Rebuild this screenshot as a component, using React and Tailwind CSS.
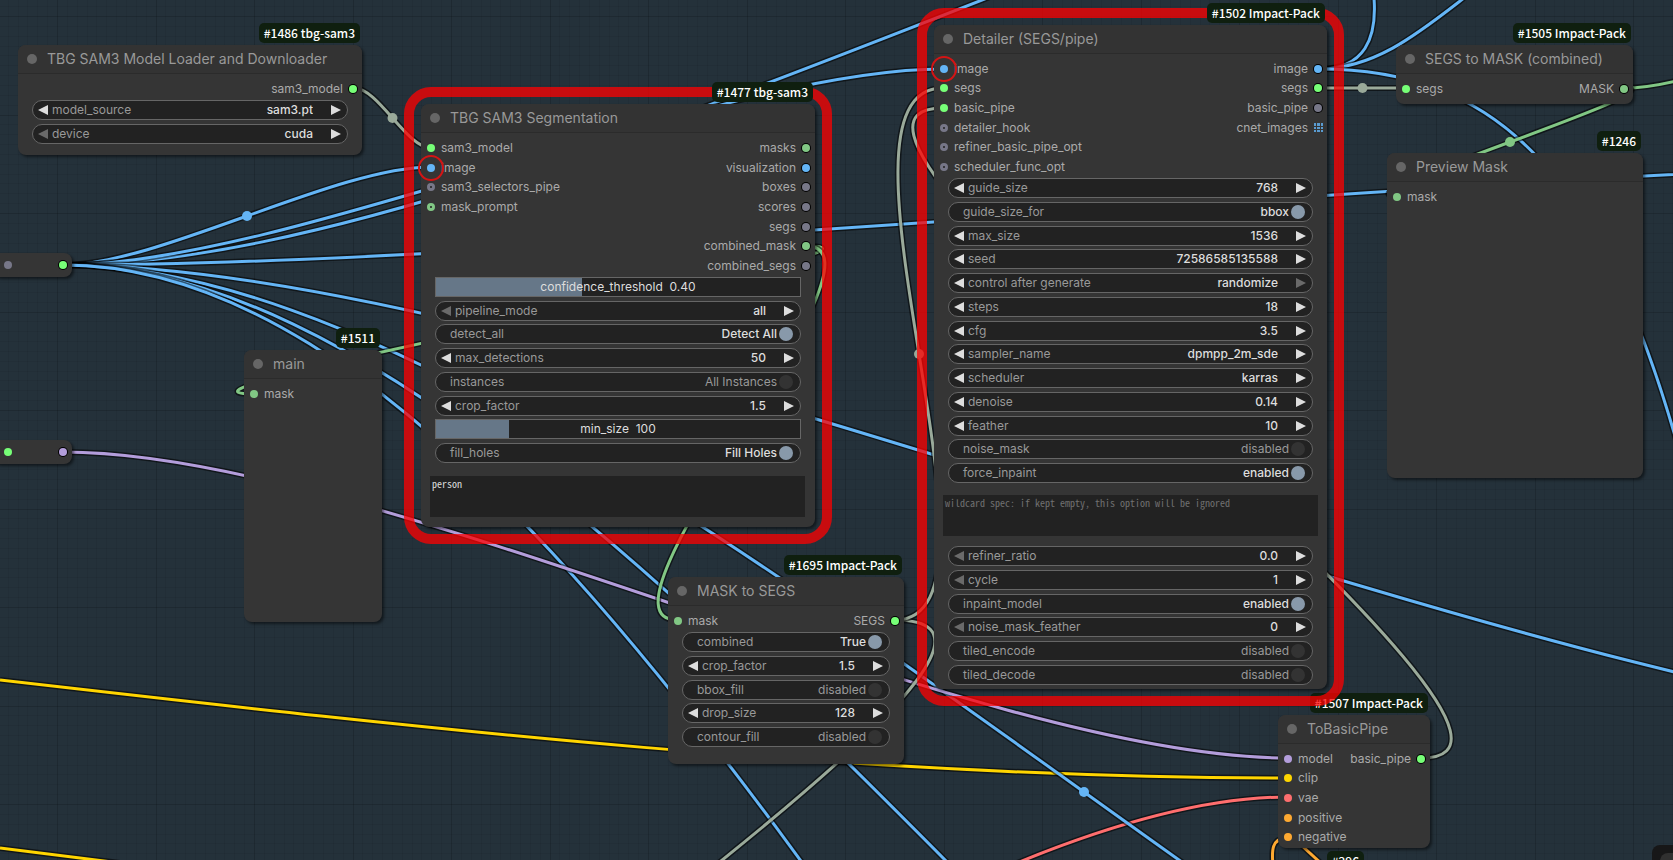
import { useId, useState } from 'react';

const LINK_COLORS = {
  image: '#64b5f6',
  mask: '#81c784',
  model: '#b39ddb',
  clip: '#ffd500',
  vae: '#ff6e6e',
  cond: '#ffa931',
  any: '#9aaa9a',
};

const PORT_FILLS = {
  image: 'bg-[#64b5f6]',
  mask: 'bg-[#81c784]',
  model: 'bg-[#b39ddb]',
  clip: 'bg-[#ffd500]',
  vae: 'bg-[#ff6e6e]',
  cond: 'bg-[#ffa931]',
  any: 'bg-[#77ff77]',
  none: 'bg-[#778]',
};

const PORT_RINGS = {
  mask: 'border-[#81c784]',
  none: 'border-[#778]',
};

// Links between ports, in canvas coordinates
const links = [
  { type: 'image', from: [63, 265], to: [431, 167], dot: true },
  { type: 'image', from: [63, 265], to: [1937, -279] },
  { type: 'image', from: [63, 265], to: [943, 69] },
  { type: 'image', from: [63, 265], to: [2040, 163] },
  { type: 'image', from: [63, 265], to: [2097, 735] },
  { type: 'image', from: [63, 265], to: [2105, 1319], dot: true },
  { type: 'image', from: [63, 265], to: [2005, 1635] },
  { type: 'image', from: [63, 265], to: [1990, 2100] },
  { type: 'any', from: [354, 88], to: [431, 148], dot: true },
  { type: 'model', from: [63, 452], to: [1288, 758] },
  { type: 'mask', from: [806, 246], to: [254, 394] },
  { type: 'mask', from: [806, 246], to: [677, 620] },
  { type: 'any', from: [895, 620], to: [100, 1450] },
  { type: 'any', from: [895, 620], to: [943, 88], dot: true },
  { type: 'any', from: [1421, 758], to: [943, 108] },
  { type: 'any', from: [1319, 88], to: [1406, 88], dot: true },
  { type: 'mask', from: [1624, 88], to: [1396, 196], dot: true },
];

// Links whose far end is off screen
const looseLinks = [
  { type: 'clip', d: 'M0 680 C427 729 860 778 1288 778' },
  { type: 'clip', d: 'M0 848 L120 863' },
  { type: 'vae', d: 'M1005 868 C1100 828 1200 797 1288 797' },
  { type: 'cond', d: 'M1288 837 C1270 839 1272 852 1273 866' },
  { type: 'cond', d: 'M1300 844 L1324 866' },
  { type: 'mask', d: 'M1624 88 C1645 88 1660 85 1680 80' },
  { type: 'image', d: 'M1319 69 C1365 69 1377 38 1374 -2' },
  { type: 'image', d: 'M1319 69 C1375 69 1420 32 1464 -2' },
  { type: 'image', d: 'M1319 69 C1490 69 1608 164 1690 492' },
];

function linkPath([x1, y1], [x2, y2]) {
  const bend = Math.hypot(x2 - x1, y2 - y1) / 4;
  return `M${x1} ${y1} C${x1 + bend} ${y1} ${x2 - bend} ${y2} ${x2} ${y2}`;
}

function Link({ type, d }) {
  return (
    <g fill="none">
      <path d={d} stroke="#000" strokeOpacity="0.55" strokeWidth="6" />
      <path d={d} stroke={LINK_COLORS[type]} strokeWidth="3" />
    </g>
  );
}

function CanvasBackground() {
  const minor = Array.from({ length: 20 }, (_, i) => Math.round((i * 197) / 20));

  return (
    <svg className="absolute inset-0 h-full w-full" aria-hidden="true">
      <defs>
        <pattern id="grid" x="57" y="16" width="197" height="197" patternUnits="userSpaceOnUse">
          {minor.map((p, i) => (
            <g key={p} fill="#000" fillOpacity={i % 10 === 0 ? 0.16 : 0.06}>
              <rect x={p} y="0" width="1" height="197" />
              <rect x="0" y={p} width="197" height="1" />
            </g>
          ))}
        </pattern>
      </defs>
      <rect width="100%" height="100%" fill="url(#grid)" />
      {looseLinks.map((link) => (
        <Link key={link.d} type={link.type} d={link.d} />
      ))}
      {links.map(({ type, from, to, dot }) => (
        <g key={`${from}-${to}`}>
          <Link type={type} d={linkPath(from, to)} />
          {dot && (
            <circle
              cx={(from[0] + to[0]) / 2}
              cy={(from[1] + to[1]) / 2}
              r="5"
              fill={LINK_COLORS[type]}
            />
          )}
        </g>
      ))}
    </svg>
  );
}

function Port({ type, output, optional }) {
  if (optional) {
    return <span className={`size-2 shrink-0 rounded-full border-[3px] bg-[#222] ${PORT_RINGS[type]}`} />;
  }
  return (
    <span
      className={`size-2 shrink-0 rounded-full ${PORT_FILLS[type]} ${output ? 'ring-1 ring-black' : ''}`}
    />
  );
}

// Image list outputs use a small grid instead of a round port
function ListPort() {
  return (
    <span className="-mr-px grid size-[9px] shrink-0 grid-cols-3 gap-px">
      {Array.from({ length: 9 }, (_, i) => (
        <span key={i} className="bg-[#5a9bd0]" />
      ))}
    </span>
  );
}

function Input({ name, type, optional, marked }) {
  return (
    <li className="flex items-center gap-[6px]">
      <span className="relative flex">
        <Port type={type} optional={optional} />
        {marked && <span className="absolute -inset-[9px] z-10 rounded-full border-2 border-[#d41414]" />}
      </span>
      {name}
    </li>
  );
}

function Output({ name, type, list }) {
  return (
    <li className="flex items-center justify-end gap-[6px]">
      {name}
      {list ? <ListPort /> : <Port type={type} output />}
    </li>
  );
}

function Slots({ inputs = [], outputs = [], height }) {
  return (
    <div className={`mt-[5px] flex justify-between px-[5px] text-xs text-[#aaa] ${height}`}>
      <ul className="grid h-full auto-rows-fr pl-px">
        {inputs.map((slot) => (
          <Input key={slot.name} {...slot} />
        ))}
        {Array.from({ length: Math.max(0, outputs.length - inputs.length) }, (_, i) => (
          <li key={i} aria-hidden="true" />
        ))}
      </ul>
      <ul className="grid h-full auto-rows-fr">
        {outputs.map((slot) => (
          <Output key={slot.name} {...slot} />
        ))}
        {Array.from({ length: Math.max(0, inputs.length - outputs.length) }, (_, i) => (
          <li key={i} aria-hidden="true" />
        ))}
      </ul>
    </div>
  );
}

function Arrow({ dir, disabled, label }) {
  return (
    <button
      type="button"
      disabled={disabled}
      aria-label={label}
      className="shrink-0 text-[#ddd] disabled:text-[#6a6a6a]"
    >
      <svg className="block h-[10px] w-[10px]" viewBox="0 0 10 10" fill="currentColor" aria-hidden="true">
        {dir === 'left' ? <path d="M10 0v10L0 5z" /> : <path d="M0 0v10l10-5z" />}
      </svg>
    </button>
  );
}

const pill = 'flex h-5 items-center rounded-full border border-[#666] bg-[#222] text-xs';
const valueField =
  'w-0 min-w-0 flex-1 appearance-none bg-transparent text-right font-medium text-[#ddd] outline-none';

function Stepper({ name, value, options, first, last }) {
  const id = useId();

  return (
    <div className={`${pill} gap-1 pr-[6px] pl-[5px]`}>
      <Arrow dir="left" disabled={first} label={`Decrease ${name}`} />
      <label htmlFor={id} className="whitespace-nowrap text-[#999]">
        {name}
      </label>
      {options ? (
        <select id={id} defaultValue={value} className={`${valueField} mr-[14px] [text-align-last:right]`}>
          {options.map((option) => (
            <option key={option}>{option}</option>
          ))}
        </select>
      ) : (
        <input id={id} type="text" defaultValue={value} className={`${valueField} mr-[14px]`} />
      )}
      <Arrow dir="right" disabled={last} label={`Increase ${name}`} />
    </div>
  );
}

function Toggle({ name, on = 'enabled', off = 'disabled', value = false }) {
  const [checked, setChecked] = useState(value);

  return (
    <label className={`${pill} justify-between pl-[14px] pr-[7px] text-[#999]`}>
      {name}
      <span className="flex items-center gap-[2px]">
        <span className={checked ? 'font-medium text-[#ddd]' : ''}>{checked ? on : off}</span>
        <input
          type="checkbox"
          checked={checked}
          onChange={(e) => setChecked(e.target.checked)}
          className="size-[14px] appearance-none rounded-full bg-[#333] checked:bg-[#89a]"
        />
      </span>
    </label>
  );
}

function Slider({ name, value, max, step = 1, digits = 0 }) {
  const [current, setCurrent] = useState(value);

  return (
    <label className="relative flex h-5 items-center justify-center border border-[#666] bg-[#222] text-xs text-[#ddd]">
      <span className="absolute inset-y-0 left-0 bg-[#678]" style={{ width: `${(current / max) * 100}%` }} />
      <span className="relative whitespace-pre">{`${name}  ${current.toFixed(digits)}`}</span>
      <input
        type="range"
        min="0"
        max={max}
        step={step}
        value={current}
        onChange={(e) => setCurrent(Number(e.target.value))}
        className="absolute inset-0 h-full w-full opacity-0"
      />
    </label>
  );
}

function Widgets({ className, children }) {
  return <div className={`mx-[14px] flex flex-col justify-between ${className}`}>{children}</div>;
}

function TextBox({ label, className = '', ...props }) {
  return (
    <textarea
      aria-label={label}
      className={`mx-[9px] block h-[41px] resize-none bg-[#222] p-[2px] font-['Noto_Sans_Mono_CJK_JP','Noto_Sans_CJK_JP',monospace] text-[10px] leading-[11px] text-[#ddd] outline-none placeholder:text-[#707070] ${className}`}
      {...props}
    />
  );
}

function Badge({ children }) {
  return (
    <span className="absolute right-[2px] bottom-full mb-[2px] h-5 whitespace-nowrap rounded-[5px] bg-[#0f1f0f] px-[5px] font-['Noto_Sans_CJK_JP',sans-serif] text-xs leading-5 font-medium text-white">
      {children}
    </span>
  );
}

function Node({ title, badge, className, highlighted, children }) {
  return (
    <section
      className={`absolute rounded-lg bg-[#353535] shadow-[2px_2px_3px_rgba(0,0,0,0.5)] ${className}`}
    >
      {highlighted && (
        <span className="pointer-events-none absolute -inset-[17px] rounded-[27px] border-[10px] border-[#ff0000]/75" />
      )}
      <Badge>{badge}</Badge>
      <header className="flex h-[29px] items-center gap-[10px] rounded-t-lg border-b border-[#2b2b2b] bg-[#333] pl-[9px]">
        <button type="button" aria-label={`Collapse ${title}`} className="size-[10px] rounded-full bg-[#666]" />
        <h2 className="whitespace-nowrap text-sm text-[#999]">{title}</h2>
      </header>
      {children}
    </section>
  );
}

function CollapsedNode({ className, input, output }) {
  return (
    <div
      className={`absolute -left-2 flex h-6 w-20 items-center justify-between rounded-lg bg-[#353535] px-[5px] pl-[12px] shadow-[2px_2px_3px_rgba(0,0,0,0.5)] ${className}`}
    >
      <Port type={input} />
      <Port type={output} output />
    </div>
  );
}

function App() {
  return (
    <main className="relative h-screen w-full overflow-hidden bg-[#24313a] font-[Inter,sans-serif]">
      <CanvasBackground />

      <CollapsedNode className="top-[253px]" input="none" output="any" />
      <CollapsedNode className="top-[440px]" input="any" output="model" />

      <Node title="TBG SAM3 Model Loader and Downloader" badge="#1486 tbg-sam3" className="top-[45px] left-[18px] w-[344px] pb-[11px]">
        <Slots height="h-5" outputs={[{ name: 'sam3_model', type: 'any' }]} />
        <Widgets className="mt-px h-11">
          <Stepper name="model_source" value="sam3.pt" options={['sam3.pt']} />
          <Stepper name="device" value="cuda" options={['cuda', 'cpu']} first />
        </Widgets>
      </Node>

      <Node title="main" badge="#1511" className="top-[350px] left-[244px] w-[138px] pb-[218px]">
        <Slots height="h-5" inputs={[{ name: 'mask', type: 'mask' }]} />
      </Node>

      <Node title="SEGS to MASK (combined)" badge="#1505 Impact-Pack" className="top-[45px] left-[1396px] w-[237px] pb-[5px]">
        <Slots
          height="h-5"
          inputs={[{ name: 'segs', type: 'any' }]}
          outputs={[{ name: 'MASK', type: 'mask' }]}
        />
      </Node>

      <Node title="Preview Mask" badge="#1246" className="top-[153px] left-[1387px] w-[256px] pb-[271px]">
        <Slots height="h-5" inputs={[{ name: 'mask', type: 'mask' }]} />
      </Node>

      <Node title="MASK to SEGS" badge="#1695 Impact-Pack" className="top-[577px] left-[668px] w-[236px] pb-[17px]">
        <Slots
          height="h-5"
          inputs={[{ name: 'mask', type: 'mask' }]}
          outputs={[{ name: 'SEGS', type: 'any' }]}
        />
        <Widgets className="mt-px h-[115px]">
          <Toggle name="combined" on="True" off="False" value />
          <Stepper name="crop_factor" value="1.5" />
          <Toggle name="bbox_fill" />
          <Stepper name="drop_size" value="128" />
          <Toggle name="contour_fill" />
        </Widgets>
      </Node>

      <Node title="ToBasicPipe" badge="#1507 Impact-Pack" className="top-[715px] left-[1278px] w-[152px] pb-px">
        <Slots
          height="h-[98px]"
          inputs={[
            { name: 'model', type: 'model' },
            { name: 'clip', type: 'clip' },
            { name: 'vae', type: 'vae' },
            { name: 'positive', type: 'cond' },
            { name: 'negative', type: 'cond' },
          ]}
          outputs={[{ name: 'basic_pipe', type: 'any' }]}
        />
      </Node>

      {/* Node just below the viewport, only its badge peeks in */}
      <div className="absolute top-[873px] left-[1300px] w-[66px]">
        <Badge>#296</Badge>
      </div>

      <Node title="TBG SAM3 Segmentation" badge="#1477 tbg-sam3" highlighted className="top-[104px] left-[421px] w-[394px] pb-[10px]">
        <Slots
          height="h-[138px]"
          inputs={[
            { name: 'sam3_model', type: 'any' },
            { name: 'image', type: 'image', marked: true },
            { name: 'sam3_selectors_pipe', type: 'none', optional: true },
            { name: 'mask_prompt', type: 'mask', optional: true },
          ]}
          outputs={[
            { name: 'masks', type: 'mask' },
            { name: 'visualization', type: 'image' },
            { name: 'boxes', type: 'none' },
            { name: 'scores', type: 'none' },
            { name: 'segs', type: 'none' },
            { name: 'combined_mask', type: 'mask' },
            { name: 'combined_segs', type: 'none' },
          ]}
        />
        <Widgets className="mt-px h-[186px]">
          <Slider name="confidence_threshold" value={0.4} max={1} step={0.01} digits={2} />
          <Stepper name="pipeline_mode" value="all" options={['all']} first />
          <Toggle name="detect_all" on="Detect All" off="Limit" value />
          <Stepper name="max_detections" value="50" />
          <Toggle name="instances" on="Per Instance" off="All Instances" />
          <Stepper name="crop_factor" value="1.5" />
          <Slider name="min_size" value={100} max={500} />
          <Toggle name="fill_holes" on="Fill Holes" off="Keep Holes" value />
        </Widgets>
        <TextBox label="prompt" defaultValue="person" className="mt-[13px] w-[375px]" />
      </Node>

      <Node title="Detailer (SEGS/pipe)" badge="#1502 Impact-Pack" highlighted className="top-[25px] left-[934px] w-[393px] pb-1">
        <Slots
          height="h-[118px]"
          inputs={[
            { name: 'image', type: 'image', marked: true },
            { name: 'segs', type: 'any' },
            { name: 'basic_pipe', type: 'any' },
            { name: 'detailer_hook', type: 'none', optional: true },
            { name: 'refiner_basic_pipe_opt', type: 'none', optional: true },
            { name: 'scheduler_func_opt', type: 'none', optional: true },
          ]}
          outputs={[
            { name: 'image', type: 'image' },
            { name: 'segs', type: 'any' },
            { name: 'basic_pipe', type: 'none' },
            { name: 'cnet_images', type: 'image', list: true },
          ]}
        />
        <Widgets className="mt-px h-[305px]">
          <Stepper name="guide_size" value="768" />
          <Toggle name="guide_size_for" on="bbox" off="crop_region" value />
          <Stepper name="max_size" value="1536" />
          <Stepper name="seed" value="72586585135588" />
          <Stepper name="control after generate" value="randomize" options={['fixed', 'increment', 'decrement', 'randomize']} last />
          <Stepper name="steps" value="18" />
          <Stepper name="cfg" value="3.5" />
          <Stepper name="sampler_name" value="dpmpp_2m_sde" options={['euler', 'dpmpp_2m_sde']} />
          <Stepper name="scheduler" value="karras" options={['normal', 'karras']} />
          <Stepper name="denoise" value="0.14" />
          <Stepper name="feather" value="10" />
          <Toggle name="noise_mask" />
          <Toggle name="force_inpaint" value />
        </Widgets>
        <TextBox
          label="wildcard"
          placeholder="wildcard spec: if kept empty, this option will be ignored"
          className="mt-3 w-[375px]"
        />
        <Widgets className="mt-[10px] h-[139px]">
          <Stepper name="refiner_ratio" value="0.0" first />
          <Stepper name="cycle" value="1" first />
          <Toggle name="inpaint_model" value />
          <Stepper name="noise_mask_feather" value="0" first />
          <Toggle name="tiled_encode" />
          <Toggle name="tiled_decode" />
        </Widgets>
      </Node>

      {/* Corner of the floating canvas toolbar */}
      <div className="absolute right-0 -bottom-4 h-[31px] w-[21px] rounded-tl-lg bg-[#171718] pt-2 pl-2">
        <div className="h-full rounded-tl-lg bg-[#303030]" />
      </div>
    </main>
  );
}

export default App;
